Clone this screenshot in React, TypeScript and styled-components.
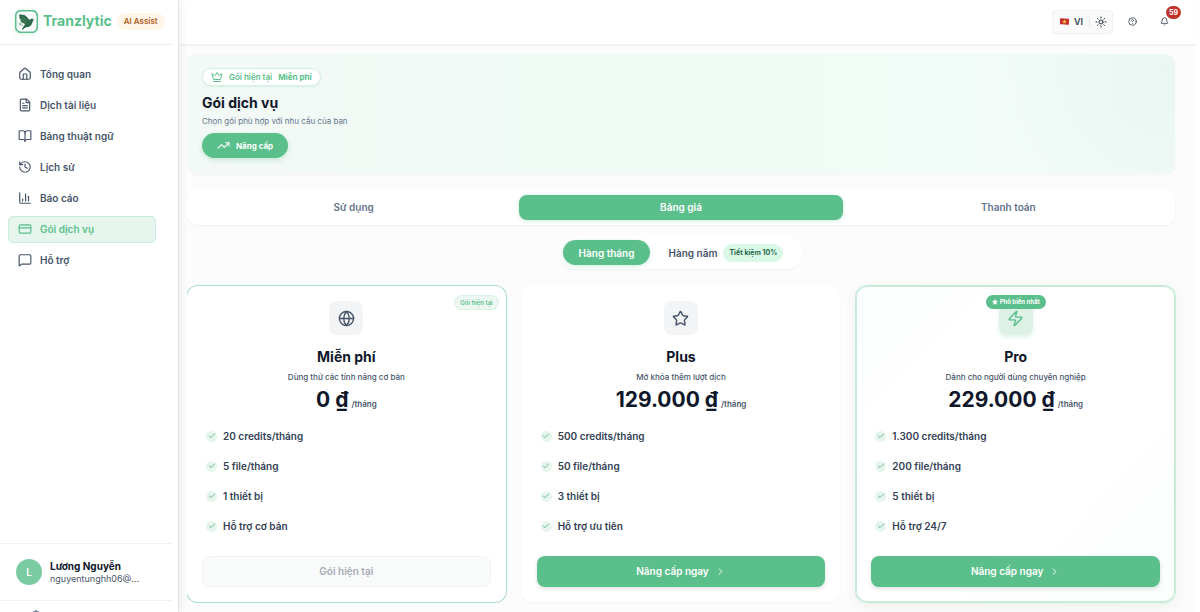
import React from "react";
import styled, { createGlobalStyle, css } from "styled-components";
import {
  House, FileText, BookOpen, History, ChartColumn, CreditCard, MessageSquare,
  Sun, CircleQuestionMark, Bell, Crown, TrendingUp, Globe, Star, Zap, Check, ChevronRight,
} from "lucide-react";

const green = "#5abf8b";

const Global = createGlobalStyle`
  *, *::before, *::after { box-sizing: border-box; }
  body { margin: 0; background: #fff; font-family: Inter, "Noto Sans", sans-serif; color: #0f172a; }
  button { font: inherit; border: 0; background: none; padding: 0; cursor: pointer; color: inherit; }
  h1, h2, p, ul { margin: 0; padding: 0; }
  ul { list-style: none; }
  svg { flex: none; display: block; }
`;

const Shell = styled.div`
  display: flex;
  height: 100vh;
  overflow: hidden;
`;

/* Sidebar */
const Sidebar = styled.aside`
  width: 179px;
  flex: none;
  display: flex;
  flex-direction: column;
  border-right: 1px solid #e2e4e6;
  padding-right: 6px;
  background: #fff;
  box-shadow: 2px 0 8px rgba(15, 23, 42, 0.06);
  z-index: 1;
`;
const Brand = styled.div`
  height: 45px;
  flex: none;
  display: flex;
  align-items: center;
  gap: 5px;
  padding: 0 0 2px 15px;
  border-bottom: 1px solid #eceef0;
`;
const LogoBox = styled.div`
  border-radius: 6px;
  box-shadow: 0 1px 5px rgba(90, 191, 139, 0.25);
`;
const BrandName = styled.span`
  font-size: 14px;
  line-height: 20px;
  font-weight: 700;
  color: ${green};
`;
const AssistTag = styled.span`
  height: 17px;
  padding: 0 7px;
  border-radius: 9px;
  background: #fff5e8;
  color: #b45a1c;
  font-size: 8px;
  line-height: 17px;
  font-weight: 600;
  white-space: nowrap;
`;
const Nav = styled.nav`
  flex: 1;
  min-height: 0;
  padding: 16px 16px 0 8px;
  display: flex;
  flex-direction: column;
  gap: 4px;
`;
const NavLink = styled.a<{ $active?: boolean }>`
  height: 27px;
  flex: none;
  display: flex;
  align-items: center;
  gap: 8px;
  padding: 0 9px 1px;
  border: 1px solid transparent;
  border-radius: 5px;
  color: #475569;
  font-size: 10px;
  font-weight: 600;
  text-decoration: none;
  ${(p) => p.$active && css`
    background: #e6f5ed;
    border-color: #c9ecda;
    color: ${green};
  `}
`;
const Profile = styled.div`
  flex: none;
  height: 58px;
  display: flex;
  align-items: center;
  gap: 8px;
  padding: 0 16px;
  border-top: 1px solid #f0f1f2;
  border-bottom: 1px solid #f0f1f2;
`;
const Avatar = styled.span`
  width: 26px;
  height: 26px;
  border-radius: 50%;
  background: #7bcba2;
  color: #fff;
  font-size: 10px;
  font-weight: 600;
  line-height: 26px;
  text-align: center;
`;
const ProfileName = styled.div`
  font-size: 10px;
  line-height: 13px;
  font-weight: 700;
`;
const ProfileMail = styled.div`
  font-size: 9px;
  line-height: 12px;
  color: #475569;
`;
const SideFooter = styled.div`
  flex: none;
  height: 11px;
  overflow: hidden;
  padding: 9px 0 0 30px;
  color: #64748b;
`;

/* Main area */
const Main = styled.div`
  flex: 1;
  min-width: 0;
  display: flex;
  flex-direction: column;
  margin-right: 5px;
  background: #fcfcfc;
`;
const Topbar = styled.header`
  height: 45px;
  flex: none;
  display: flex;
  align-items: center;
  justify-content: flex-end;
  padding: 0 26px 1px 0;
  background: #fff;
  border-bottom: 1px solid #eeefef;
  box-shadow: 0 1px 2px rgba(15, 23, 42, 0.04);
`;
const Prefs = styled.div`
  height: 24px;
  display: flex;
  align-items: center;
  padding: 0 5px 0 7px;
  border: 1px solid #f1f1f2;
  border-radius: 4px;
  background: #fafafa;
  color: #334155;
`;
const LangButton = styled.button`
  display: flex;
  align-items: center;
  gap: 5px;
  padding-right: 6px;
  border-right: 1px solid #e8e8ea;
  font-size: 9px;
  line-height: 11px;
  font-weight: 600;
`;
const IconButton = styled.button<{ $gap?: number }>`
  position: relative;
  display: flex;
  margin-left: ${(p) => p.$gap ?? 0}px;
  color: #27303f;
`;
const Count = styled.span`
  position: absolute;
  left: 6px;
  bottom: 7px;
  padding: 0 3px;
  border-radius: 7px;
  background: #c0322b;
  color: #fff;
  font-size: 7px;
  line-height: 13px;
  font-weight: 700;
`;
const Content = styled.main`
  flex: 1;
  min-height: 0;
  margin-left: 8px;
  padding: 9px 20px 0 0;
  overflow: hidden;
  display: flex;
  flex-direction: column;
`;
const Hero = styled.section`
  flex: none;
  height: 120px;
  padding: 14px 15px;
  border-radius: 10px;
  display: flex;
  flex-direction: column;
  align-items: flex-start;
  background:
    radial-gradient(circle at 100% 10%, rgba(90, 170, 130, 0.06), transparent 180px),
    linear-gradient(90deg, #f3f9f6 0%, #f0faf5 35%, #f2fcf7 70%, #f2fbf8 100%);
  box-shadow: 0 1px 2px rgba(15, 23, 42, 0.04);
`;
const CurrentChip = styled.div`
  height: 18px;
  display: flex;
  align-items: center;
  gap: 6px;
  padding: 0 8px;
  border: 1px solid #d6f0e2;
  border-radius: 9px;
  background: #fff;
  color: ${green};
  font-size: 8px;
  font-weight: 600;
  box-shadow: 0 1px 2px rgba(90, 191, 139, 0.15);
  strong { font-weight: 700; }
`;
const PageTitle = styled.h1`
  margin-top: 6px;
  font-size: 14px;
  line-height: 21px;
  font-weight: 700;
`;
const PageLead = styled.p`
  margin-top: 2px;
  font-size: 8px;
  line-height: 13px;
  color: #64748b;
`;
const UpgradePill = styled.button`
  height: 25px;
  margin-top: 5px;
  padding: 0 15px;
  display: flex;
  align-items: center;
  gap: 6px;
  border-radius: 13px;
  background: ${green};
  color: #fff;
  font-size: 8px;
  font-weight: 700;
  box-shadow: 0 2px 5px rgba(90, 191, 139, 0.3);
`;
const Tabs = styled.div`
  flex: none;
  margin-top: 16px;
  padding: 5px;
  display: grid;
  grid-template-columns: repeat(3, 1fr);
  gap: 4px;
  border-radius: 11px;
  background: #fff;
  box-shadow: 0 1px 2px rgba(15, 23, 42, 0.05);
`;
const Tab = styled.button<{ $active?: boolean }>`
  height: 25px;
  padding-bottom: 1px;
  border-radius: 8px;
  font-size: 10px;
  font-weight: 600;
  color: #64748b;
  ${(p) => p.$active && css`
    background: ${green};
    color: #fff;
    box-shadow: 0 1px 4px rgba(90, 191, 139, 0.3);
  `}
`;
const Billing = styled.div`
  flex: none;
  align-self: center;
  margin-top: 11px;
  padding: 4px;
  display: flex;
  gap: 2px;
  border-radius: 17px;
  background: #fff;
  box-shadow: 0 1px 2px rgba(15, 23, 42, 0.05);
`;
const Period = styled.button<{ $active?: boolean }>`
  height: 25px;
  padding: 0 16px;
  display: flex;
  align-items: center;
  gap: 6px;
  border-radius: 13px;
  font-size: 10px;
  font-weight: 600;
  color: #475569;
  ${(p) => p.$active && css`
    background: ${green};
    color: #fff;
    box-shadow: 0 1px 4px rgba(90, 191, 139, 0.3);
  `}
`;
const Saving = styled.span`
  padding: 0 6px;
  border-radius: 9px;
  background: #d9f8e6;
  color: #256a48;
  font-size: 7px;
  line-height: 18px;
  font-weight: 700;
`;
const Plans = styled.div`
  flex: none;
  margin-top: 17px;
  display: grid;
  grid-template-columns: repeat(3, 1fr);
  gap: 16px;
`;
const Card = styled.article<{ $kind: "current" | "plain" | "popular" }>`
  position: relative;
  height: 316px;
  padding: 15px;
  display: flex;
  flex-direction: column;
  align-items: center;
  border-radius: 11px;
  background: #fff;
  box-shadow: 0 1px 2px rgba(15, 23, 42, 0.03);
  ${(p) => p.$kind === "current" && css`
    box-shadow: 0 0 0 1px #a9dfc3;
  `}
  ${(p) => p.$kind === "popular" && css`
    background: linear-gradient(135deg, #fbfefd, #fff 30%, #fff 60%, #fbfefd);
    box-shadow: inset 0 0 0 1px #c8ebd8, 0 0 0 1px #c8ebd8, 0 4px 14px rgba(15, 60, 40, 0.08);
  `}
`;
const CurrentBadge = styled.span`
  position: absolute;
  top: 9px;
  right: 7px;
  padding: 0 5px;
  border: 1px solid #d9f1e4;
  border-radius: 8px;
  background: #edf8f2;
  color: ${green};
  font-size: 6px;
  line-height: 13px;
  font-weight: 600;
`;
const PopularBadge = styled.span`
  position: absolute;
  top: 9px;
  left: 50%;
  transform: translateX(-50%);
  display: flex;
  align-items: center;
  gap: 2px;
  padding: 0 6px;
  border-radius: 7px;
  background: ${green};
  color: #fff;
  font-size: 6px;
  line-height: 14px;
  font-weight: 700;
  white-space: nowrap;
`;
const PlanIcon = styled.div<{ $tint?: boolean }>`
  width: 34px;
  height: 34px;
  flex: none;
  display: grid;
  place-items: center;
  border-radius: 8px;
  background: ${(p) => (p.$tint ? "#ddf1e6" : "#f3f4f6")};
  color: ${(p) => (p.$tint ? green : "#475569")};
  box-shadow: ${(p) => (p.$tint ? "0 2px 4px rgba(90, 191, 139, 0.2)" : "none")};
`;
const PlanName = styled.h2`
  margin-top: 12px;
  font-size: 14px;
  line-height: 20px;
  font-weight: 700;
`;
const PlanLead = styled.p`
  margin-top: 4px;
  font-size: 8px;
  line-height: 12px;
  font-weight: 500;
  color: #475569;
`;
const Price = styled.p`
  margin-top: 2px;
  display: flex;
  align-items: baseline;
  gap: 3px;
  font-size: 21px;
  line-height: 30px;
  font-weight: 700;
  span { font-size: 8px; font-weight: 600; color: #475569; }
`;
const Features = styled.ul`
  align-self: stretch;
  margin-top: 9px;
  padding-left: 4px;
  display: grid;
  gap: 14px;
`;
const Feature = styled.li`
  display: flex;
  align-items: center;
  gap: 6px;
  font-size: 10px;
  line-height: 16px;
  font-weight: 600;
  color: #334155;
`;
const Tick = styled.span`
  width: 11px;
  height: 11px;
  display: grid;
  place-items: center;
  border-radius: 50%;
  background: #e6f5ed;
  color: #2f9a66;
`;
const PlanButton = styled.button`
  align-self: stretch;
  height: 31px;
  flex: none;
  margin-top: auto;
  padding-bottom: 1px;
  display: flex;
  align-items: center;
  justify-content: center;
  gap: 6px;
  border-radius: 8px;
  background: ${green};
  color: #fff;
  font-size: 10px;
  font-weight: 600;
  box-shadow: 0 2px 4px rgba(15, 60, 40, 0.14);
  &:disabled {
    border: 1px solid #f1f3f3;
    background: #f9fafa;
    color: #a8adb8;
    box-shadow: none;
    cursor: default;
  }
`;

const Logo = () => (
  <svg width="23" height="23" viewBox="0 0 69 69" aria-hidden="true">
    <rect x="2" y="2" width="65" height="65" rx="16" fill="#fff" stroke="#5abf8b" strokeWidth="5" />
    <path
      d="M11 15 C19 12 30 14 36 21 C39 25 42 29 44 30 C46 26 51 25 58 28 C55 30 54 32 53 36 C51 45 44 51 36 52 C31 52 27 56 22 60 L21 57 C25 51 28 47 30 42 C24 40 18 36 15 31 L19 31 C14 27 12 22 12 19 L16 21 Z"
      fill="#2c6a49"
    />
    <path d="M21 20 L36 34 M18 26 L32 38" stroke="#8cc7a6" strokeWidth="1" />
    <path d="M16 37v10M11 42h10M22 44v5M9 38v2M21 38v2" stroke="#4a9a72" strokeWidth="2" />
  </svg>
);

const Flag = () => (
  <svg width="9" height="7" viewBox="0 0 18 14" aria-hidden="true">
    <path d="M0 1 C6 -1 12 3 18 1 V13 C12 15 6 11 0 13 Z" fill="#c8322c" />
    <path d="M9 3l1.200 2.800 3 .2-2.300 2 .7 3L9 9.400 6.400 11l.7-3-2.300-2 3-.2z" fill="#f9d84a" />
  </svg>
);

const navItems = [
  { icon: House, label: "Tổng quan" },
  { icon: FileText, label: "Dịch tài liệu" },
  { icon: BookOpen, label: "Bảng thuật ngữ" },
  { icon: History, label: "Lịch sử" },
  { icon: ChartColumn, label: "Báo cáo" },
  { icon: CreditCard, label: "Gói dịch vụ", active: true },
  { icon: MessageSquare, label: "Hỗ trợ" },
];

const plans = [
  {
    kind: "current" as const, icon: Globe, name: "Miễn phí", lead: "Dùng thử các tính năng cơ bản", price: "0 ₫",
    features: ["20 credits/tháng", "5 file/tháng", "1 thiết bị", "Hỗ trợ cơ bản"],
  },
  {
    kind: "plain" as const, icon: Star, name: "Plus", lead: "Mở khóa thêm lượt dịch", price: "129.000 ₫",
    features: ["500 credits/tháng", "50 file/tháng", "3 thiết bị", "Hỗ trợ ưu tiên"],
  },
  {
    kind: "popular" as const, icon: Zap, name: "Pro", lead: "Dành cho người dùng chuyên nghiệp", price: "229.000 ₫",
    features: ["1.300 credits/tháng", "200 file/tháng", "5 thiết bị", "Hỗ trợ 24/7"],
  },
];

export default function App() {
  return (
    <Shell>
      <Global />
      <Sidebar>
        <Brand>
          <LogoBox><Logo /></LogoBox>
          <BrandName>Tranzlytic</BrandName>
          <AssistTag>AI Assist</AssistTag>
        </Brand>
        <Nav>
          {navItems.map(({ icon: Icon, label, active }) => (
            <NavLink key={label} href="#" $active={active} aria-current={active ? "page" : undefined}>
              <Icon size={14} strokeWidth={2} />
              {label}
            </NavLink>
          ))}
        </Nav>
        <Profile>
          <Avatar>L</Avatar>
          <div>
            <ProfileName>Lương Nguyễn</ProfileName>
            <ProfileMail>nguyentunghh06@...</ProfileMail>
          </div>
        </Profile>
        <SideFooter><Globe size={12} /></SideFooter>
      </Sidebar>
      <Main>
        <Topbar>
          <Prefs>
            <LangButton><Flag />VI</LangButton>
            <IconButton $gap={5} aria-label="Giao diện"><Sun size={12} /></IconButton>
          </Prefs>
          <IconButton $gap={15} aria-label="Trợ giúp"><CircleQuestionMark size={9} /></IconButton>
          <IconButton $gap={23} aria-label="Thông báo"><Bell size={9} /><Count>59</Count></IconButton>
        </Topbar>
        <Content>
          <Hero>
            <CurrentChip><Crown size={12} /><span>Gói hiện tại</span><strong>Miễn phí</strong></CurrentChip>
            <PageTitle>Gói dịch vụ</PageTitle>
            <PageLead>Chọn gói phù hợp với nhu cầu của bạn</PageLead>
            <UpgradePill><TrendingUp size={13} />Nâng cấp</UpgradePill>
          </Hero>
          <Tabs role="tablist">
            <Tab role="tab">Sử dụng</Tab>
            <Tab role="tab" aria-selected $active>Bảng giá</Tab>
            <Tab role="tab">Thanh toán</Tab>
          </Tabs>
          <Billing>
            <Period $active>Hàng tháng</Period>
            <Period>Hàng năm<Saving>Tiết kiệm 10%</Saving></Period>
          </Billing>
          <Plans>
            {plans.map(({ kind, icon: Icon, name, lead, price, features }) => (
              <Card key={name} $kind={kind}>
                {kind === "current" && <CurrentBadge>Gói hiện tại</CurrentBadge>}
                <PlanIcon $tint={kind === "popular"}><Icon size={17} /></PlanIcon>
                {kind === "popular" && (
                  <PopularBadge><Star size={6} fill="currentColor" />Phổ biến nhất</PopularBadge>
                )}
                <PlanName>{name}</PlanName>
                <PlanLead>{lead}</PlanLead>
                <Price>{price}<span>/tháng</span></Price>
                <Features>
                  {features.map((f) => (
                    <Feature key={f}><Tick><Check size={8} /></Tick>{f}</Feature>
                  ))}
                </Features>
                {kind === "current"
                  ? <PlanButton disabled>Gói hiện tại</PlanButton>
                  : <PlanButton>Nâng cấp ngay<ChevronRight size={11} /></PlanButton>}
              </Card>
            ))}
          </Plans>
        </Content>
      </Main>
    </Shell>
  );
}
